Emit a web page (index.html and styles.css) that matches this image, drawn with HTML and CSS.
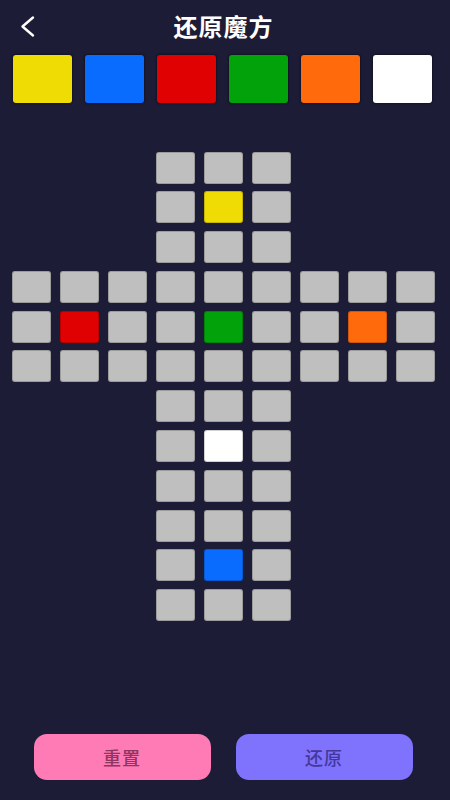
FILE: index.html
```html
<!DOCTYPE html>
<html lang="zh">
<head>
<meta charset="utf-8">
<link rel="stylesheet" href="styles.css">
</head>
<body>
<div class="page">
  <header class="header">
    <svg class="back" width="40" height="52" viewBox="0 0 40 52"><polyline points="33,17.5 22.5,26.5 33,35.5" fill="none" stroke="#fff" stroke-width="2.4" stroke-linecap="round" stroke-linejoin="round"/></svg>
    <h1 class="title">还原魔方</h1>
  </header>
  <div class="palette">
    <div class="sw yellow"></div>
    <div class="sw blue"></div>
    <div class="sw red"></div>
    <div class="sw green"></div>
    <div class="sw orange"></div>
    <div class="sw white"></div>
  </div>
  <div class="cube">
    <div class="row narrow"><div class="c"></div><div class="c"></div><div class="c"></div></div>
    <div class="row narrow"><div class="c"></div><div class="c yellow"></div><div class="c"></div></div>
    <div class="row narrow"><div class="c"></div><div class="c"></div><div class="c"></div></div>
    <div class="row"><div class="c"></div><div class="c"></div><div class="c"></div><div class="c"></div><div class="c"></div><div class="c"></div><div class="c"></div><div class="c"></div><div class="c"></div></div>
    <div class="row"><div class="c"></div><div class="c red"></div><div class="c"></div><div class="c"></div><div class="c green"></div><div class="c"></div><div class="c"></div><div class="c orange"></div><div class="c"></div></div>
    <div class="row"><div class="c"></div><div class="c"></div><div class="c"></div><div class="c"></div><div class="c"></div><div class="c"></div><div class="c"></div><div class="c"></div><div class="c"></div></div>
    <div class="row narrow"><div class="c"></div><div class="c"></div><div class="c"></div></div>
    <div class="row narrow"><div class="c"></div><div class="c white"></div><div class="c"></div></div>
    <div class="row narrow"><div class="c"></div><div class="c"></div><div class="c"></div></div>
    <div class="row narrow"><div class="c"></div><div class="c"></div><div class="c"></div></div>
    <div class="row narrow"><div class="c"></div><div class="c blue"></div><div class="c"></div></div>
    <div class="row narrow"><div class="c"></div><div class="c"></div><div class="c"></div></div>
  </div>
  <div class="actions">
    <button class="btn reset">重置</button>
    <button class="btn solve">还原</button>
  </div>
</div>
</body>
</html>
```
FILE: styles.css
```css
* { box-sizing: border-box; }
html, body {
  margin: 0;
  padding: 0;
  background: #1d1c37;
}
body {
  font-family: "Noto Sans CJK SC", "Noto Sans", sans-serif;
  color: #fff;
}
.page {
  width: 450px;
  height: 800px;
  display: flex;
  flex-direction: column;
}
.header {
  height: 52px;
  display: flex;
  align-items: center;
  justify-content: center;
  position: relative;
}
.back {
  position: absolute;
  left: 0;
  top: 0;
}
.title {
  margin: 0 0 0 -3px;
  font-size: 24px;
  font-weight: 700;
  letter-spacing: 1px;
  line-height: 1;
  color: #fff;
}
.palette {
  display: grid;
  grid-template-columns: repeat(6, 59px);
  column-gap: 13.2px;
  margin: 3px 0 0 12.5px;
}
.sw {
  height: 48px;
  border-radius: 3px;
  box-shadow: 0 0 2px 1px rgba(0, 0, 0, 0.35);
}
.yellow { background: #f0dc05; }
.blue { background: #0a6cff; }
.red { background: #e00202; }
.green { background: #01a20a; }
.orange { background: #ff6a0c; }
.white { background: #ffffff; }
.cube {
  margin-top: 48.5px;
  margin-left: 11.7px;
  display: flex;
  flex-direction: column;
  gap: 7.8px;
}
.row {
  display: flex;
  gap: 9px;
}
.row.narrow {
  margin-left: 144px;
}
.c {
  width: 39px;
  height: 32px;
  border-radius: 3px;
  background: #bfbfbf;
  box-shadow: inset 0 0 0 1px rgba(0, 0, 0, 0.18);
}
.c.yellow { background: #f0dc05; }
.c.blue { background: #0a6cff; }
.c.red { background: #e00202; }
.c.green { background: #01a20a; }
.c.orange { background: #ff6a0c; }
.c.white { background: #ffffff; }
.actions {
  margin-top: auto;
  margin-bottom: 20px;
  display: flex;
  gap: 25px;
  padding-left: 33.5px;
}
.btn {
  width: 177px;
  height: 46px;
  border: none;
  border-radius: 13px;
  font-family: "Noto Sans CJK SC", "Noto Sans", sans-serif;
  font-size: 18px;
  font-weight: 500;
  letter-spacing: 1px;
  padding: 0;
}
.reset {
  background: #ff7bb5;
  color: #8e3560;
}
.solve {
  background: #7f72fd;
  color: #42389c;
}
```
